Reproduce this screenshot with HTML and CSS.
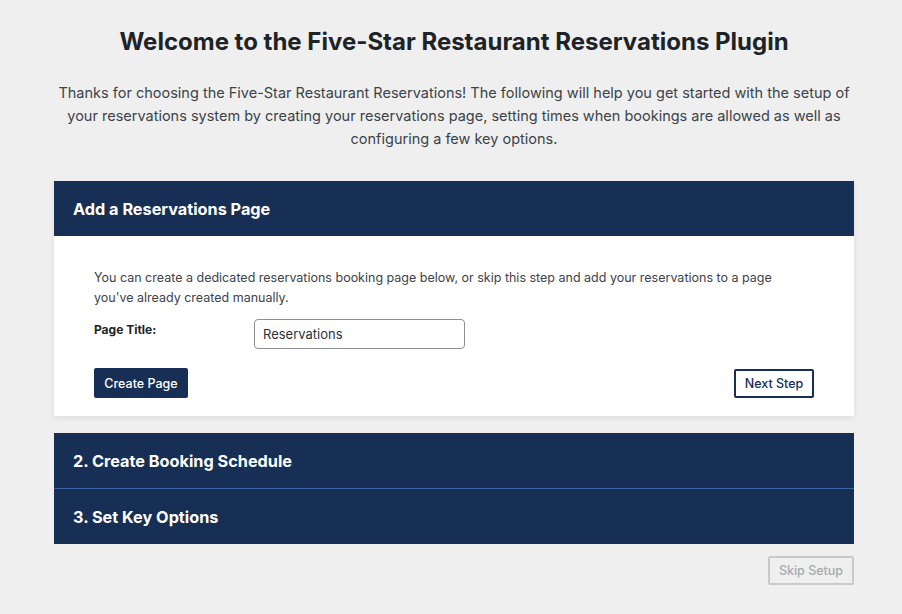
FILE: index.html
```html
<!DOCTYPE html>
<html>
<head>
<meta charset="utf-8">
<link rel="stylesheet" href="styles.css">
</head>
<body>
<div class="wrap">
  <h1 class="title">Welcome to the Five-Star Restaurant Reservations Plugin</h1>
  <p class="intro">Thanks for choosing the Five-Star Restaurant Reservations! The following will help you get started with the setup of your reservations system by creating your reservations page, setting times when bookings are allowed as well as configuring a few key options.</p>

  <div class="step open">
    <div class="step-head">Add a Reservations Page</div>
    <div class="step-body">
      <p class="desc">You can create a dedicated reservations booking page below, or skip this step and add your reservations to a page you've already created manually.</p>
      <div class="field">
        <label class="label">Page Title:</label>
        <input class="input" type="text" value="Reservations">
      </div>
      <div class="actions">
        <button class="btn btn-primary">Create Page</button>
        <button class="btn btn-outline">Next Step</button>
      </div>
    </div>
  </div>

  <div class="steps">
    <div class="step-head">2. Create Booking Schedule</div>
    <div class="step-head sep">3. Set Key Options</div>
  </div>

  <div class="footer">
    <button class="btn btn-skip">Skip Setup</button>
  </div>
</div>
</body>
</html>
```

FILE: styles.css
```css
html, body {
  margin: 0;
  padding: 0;
  background: #efefef;
}
body {
  font-family: Inter, "Noto Sans", sans-serif;
  color: #3c434a;
}
.wrap {
  width: 800px;
  margin: 0 0 0 54px;
  padding-top: 26px;
}
.title {
  margin: 0;
  text-align: center;
  font-size: 24px;
  line-height: 32px;
  font-weight: 700;
  color: #1d2327;
}
.intro {
  margin: 23px 0 0;
  text-align: center;
  font-size: 14.5px;
  line-height: 23px;
  color: #3c434a;
}
.step {
  margin-top: 31px;
  box-shadow: 0 2px 6px rgba(0,0,0,0.08);
}
.step-head {
  background: #172f55;
  color: #fff;
  font-size: 16.25px;
  font-weight: 700;
  height: 55px;
  line-height: 57px;
  padding: 0 18px 0 19px;
  box-sizing: border-box;
}
.step-body {
  background: #fff;
  padding: 32px 40px 18px;
}
.desc {
  margin: 0;
  font-size: 12.5px;
  line-height: 20px;
  color: #3c434a;
}
.field {
  display: flex;
  align-items: flex-start;
  margin-top: 11px;
}
.label {
  width: 160px;
  font-size: 12px;
  font-weight: 700;
  color: #1d2327;
  padding-top: 3px;
}
.input {
  width: 211px;
  height: 30px;
  box-sizing: border-box;
  border: 1px solid #8c8f94;
  border-radius: 4px;
  padding: 0 8px;
  font-family: inherit;
  font-size: 13px;
  color: #2c3338;
  background: #fff;
}
.actions {
  display: flex;
  justify-content: space-between;
  align-items: center;
  margin-top: 19px;
}
.btn {
  font-family: inherit;
  font-size: 12.5px;
  font-weight: 500;
  cursor: pointer;
  box-sizing: border-box;
}
.btn-primary {
  background: #172f55;
  color: #fff;
  border: 0;
  border-radius: 2px;
  height: 30px;
  padding: 0 10px 0 10px;
  width: 94px;
}
.btn-outline {
  background: #fff;
  color: #172f55;
  border: 2px solid #172f55;
  border-radius: 2px;
  height: 29px;
  width: 80px;
  padding: 0;
}
.steps {
  margin-top: 17px;
}
.sep {
  border-top: 1px solid #3a64a6;
  height: 56px;
}
.footer {
  display: flex;
  justify-content: flex-end;
  margin-top: 12px;
}
.btn-skip {
  background: transparent;
  color: #a7aaad;
  border: 2px solid #c9c9c9;
  border-radius: 2px;
  height: 29px;
  width: 86px;
  padding: 0;
}
```
